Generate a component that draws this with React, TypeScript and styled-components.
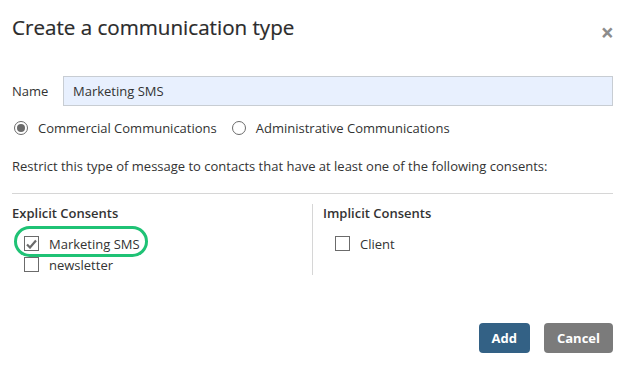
import React from 'react';
import styled, { createGlobalStyle } from 'styled-components';

const GlobalStyle = createGlobalStyle`
  html, body {
    margin: 0;
    padding: 0;
    background: #fff;
  }
  body {
    font-family: "Open Sans", "Liberation Sans", sans-serif;
    color: #333;
  }
`;

const Dialog = styled.div`
  width: 625px;
  height: 367px;
  box-sizing: border-box;
  padding: 0 12px 0 12px;
  display: flex;
  flex-direction: column;
`;

const Header = styled.div`
  display: flex;
  justify-content: space-between;
  align-items: center;
  height: 52px;
  padding-top: 1px;
`;

const Title = styled.h3`
  margin: 0;
  font-size: 20.6px;
  font-weight: 400;
  color: #2b2b2b;
  -webkit-text-stroke: 0.2px #2b2b2b;
`;

const Close = styled.span`
  font-size: 23px;
  font-weight: 700;
  color: #8c8c8c;
  margin-top: 10px;
  margin-right: -1px;
  line-height: 1;
`;

const NameRow = styled.div`
  display: flex;
  align-items: center;
  margin-top: 23px;
  gap: 12px;
`;

const Label = styled.label`
  font-size: 13px;
  width: 39px;
`;

const Input = styled.input`
  flex: 1;
  height: 30px;
  box-sizing: border-box;
  border: 1px solid #c8cdd3;
  background: #e8f0fe;
  padding: 0 9px;
  font-family: inherit;
  font-size: 13px;
  color: #333;
  outline: 0;
`;

const RadioRow = styled.div`
  display: flex;
  align-items: center;
  margin-top: 13px;
  height: 18px;
`;

const RadioItem = styled.label`
  display: flex;
  align-items: center;
  font-size: 13px;
  margin-right: 13px;
  margin-left: 2px;
`;

const RadioCircle = styled.span<{ checked?: boolean }>`
  width: 14px;
  height: 14px;
  border-radius: 50%;
  border: 1px solid #6b6b6b;
  box-sizing: border-box;
  margin-right: 10px;
  display: flex;
  align-items: center;
  justify-content: center;
  &::after {
    content: '';
    width: 8px;
    height: 8px;
    border-radius: 50%;
    background: ${({ checked }) => (checked ? '#6b6b6b' : 'transparent')};
  }
`;

const Restrict = styled.p`
  margin: 20px 0 0;
  font-size: 13px;
  line-height: 18px;
`;

const Divider = styled.hr`
  border: 0;
  border-top: 1px solid #d6d6d6;
  margin: 18px 0 0;
`;

const Columns = styled.div`
  display: flex;
  margin-top: 10px;
`;

const Column = styled.div<{ divided?: boolean }>`
  flex: 0 0 ${({ divided }) => (divided ? '290px' : '300px')};
  min-height: 69px;
  padding-left: ${({ divided }) => (divided ? '10px' : '0')};
  border-left: ${({ divided }) => (divided ? '1px solid #d6d6d6' : '0')};
`;

const ColumnTitle = styled.div`
  font-size: 13px;
  font-weight: 600;
  line-height: 18px;
`;

const List = styled.div`
  position: relative;
  display: flex;
  flex-direction: column;
  margin-top: 11px;
  padding-left: 12px;
`;

const CheckRow = styled.label`
  display: flex;
  align-items: center;
  height: 21px;
  font-size: 13px;
`;

const Box = styled.span`
  width: 15px;
  height: 15px;
  box-sizing: border-box;
  border: 1px solid #6b6b6b;
  margin-right: 10px;
  display: flex;
  align-items: center;
  justify-content: center;
`;

const Highlight = styled.span`
  position: absolute;
  left: 2px;
  top: -7px;
  width: 134px;
  height: 31px;
  box-sizing: border-box;
  border: 3px solid #1fc275;
  border-radius: 16px;
  pointer-events: none;
`;

const Footer = styled.div`
  display: flex;
  justify-content: flex-end;
  gap: 14px;
  margin-top: 48px;
`;

const Button = styled.button<{ variant: 'primary' | 'secondary' }>`
  height: 30px;
  padding: 0 13px;
  border: 0;
  border-radius: 4px;
  font-family: inherit;
  font-size: 13px;
  font-weight: 700;
  color: #fff;
  background: ${({ variant }) => (variant === 'primary' ? '#336185' : '#7b7b7b')};
`;

const Check = () => (
  <svg width="11" height="10" viewBox="0 0 11 10">
    <path d="M1 5.5 L4 8.5 L10 1.5" fill="none" stroke="#6b6b6b" strokeWidth="2.2" />
  </svg>
);

export default function App() {
  return (
    <Dialog>
      <GlobalStyle />
      <Header>
        <Title>Create a communication type</Title>
        <Close>×</Close>
      </Header>
      <NameRow>
        <Label>Name</Label>
        <Input defaultValue="Marketing SMS" />
      </NameRow>
      <RadioRow>
        <RadioItem>
          <RadioCircle checked />
          Commercial Communications
        </RadioItem>
        <RadioItem>
          <RadioCircle />
          Administrative Communications
        </RadioItem>
      </RadioRow>
      <Restrict>
        Restrict this type of message to contacts that have at least one of the following consents:
      </Restrict>
      <Divider />
      <Columns>
        <Column>
          <ColumnTitle>Explicit Consents</ColumnTitle>
          <List>
            <Highlight />
            <CheckRow>
              <Box>
                <Check />
              </Box>
              Marketing SMS
            </CheckRow>
            <CheckRow>
              <Box />
              newsletter
            </CheckRow>
          </List>
        </Column>
        <Column divided>
          <ColumnTitle>Implicit Consents</ColumnTitle>
          <List>
            <CheckRow>
              <Box />
              Client
            </CheckRow>
          </List>
        </Column>
      </Columns>
      <Footer>
        <Button variant="primary">Add</Button>
        <Button variant="secondary">Cancel</Button>
      </Footer>
    </Dialog>
  );
}
